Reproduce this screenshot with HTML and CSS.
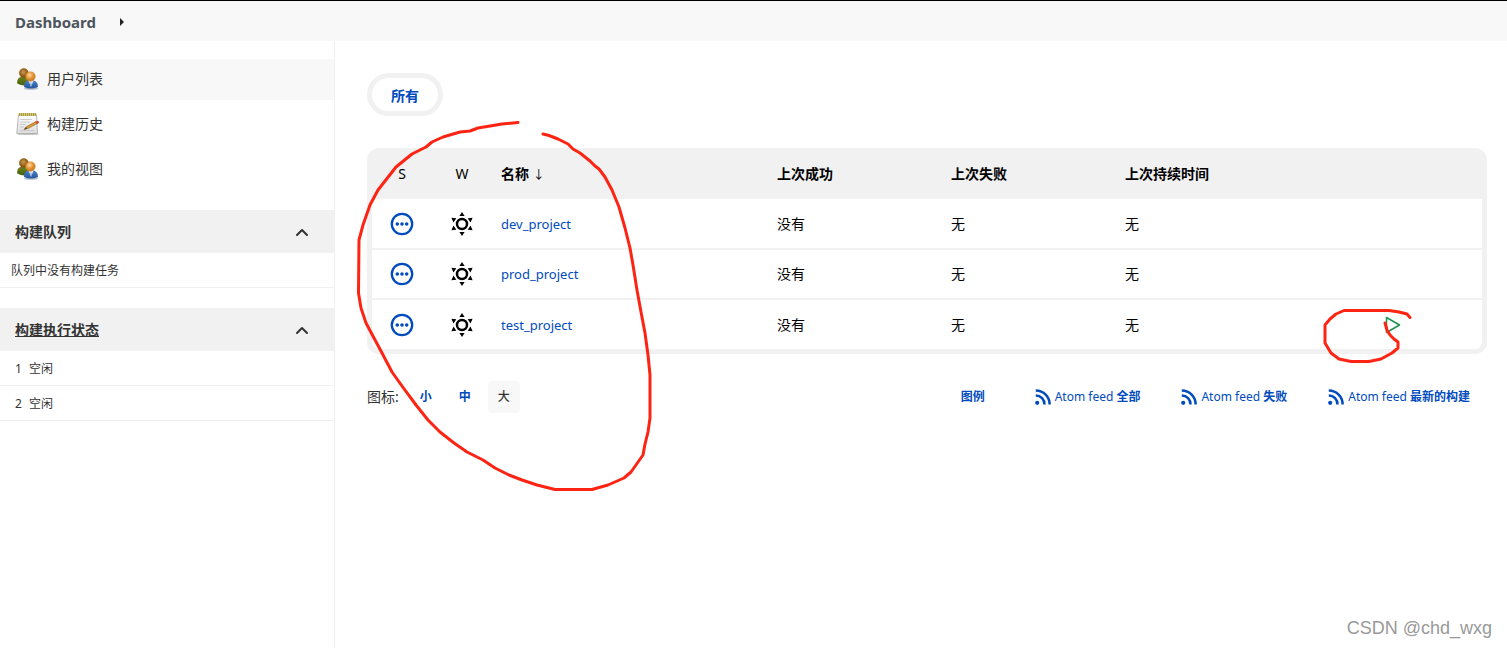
FILE: index.html
```html
<!DOCTYPE html>
<html lang="zh-CN">
<head>
<meta charset="utf-8">
<title>Dashboard</title>
<link rel="stylesheet" href="styles.css">
</head>
<body>
<svg class="sprites" width="0" height="0" aria-hidden="true">
  <defs>
    <radialGradient id="skin" cx="40%" cy="35%"><stop offset="0" stop-color="#ffd9a0"/><stop offset=".6" stop-color="#eba047"/><stop offset="1" stop-color="#d08328"/></radialGradient>
    <radialGradient id="tan" cx="45%" cy="40%"><stop offset="0" stop-color="#c99b50"/><stop offset="1" stop-color="#8a5310"/></radialGradient>
    <linearGradient id="blue" x2="0" y2="1"><stop offset="0" stop-color="#4b83c8"/><stop offset="1" stop-color="#24549b"/></linearGradient>
    <linearGradient id="green" x2="0" y2="1"><stop offset="0" stop-color="#6f8420"/><stop offset="1" stop-color="#48600c"/></linearGradient>
    <linearGradient id="paper" x2="0" y2="1"><stop offset="0" stop-color="#fff"/><stop offset="1" stop-color="#dcdcdc"/></linearGradient>
  </defs>
  <symbol id="people" viewBox="0 0 24 24">
    <path d="M1.200 16.500Q.8 10 6 9.500H10Q14 10 14 15V17Q8 20 1.200 16.500Z" fill="url(#green)"/>
    <circle cx="7.800" cy="6" r="4.500" fill="url(#tan)" stroke="#855516" stroke-width=".5"/>
    <ellipse cx="15" cy="21.500" rx="7" ry="1.300" fill="#8a95a5" opacity=".6"/>
    <path d="M8 20Q8 14 12.500 13.500H17Q22 14 22 20Q15 23 8 20Z" fill="url(#blue)"/>
    <path d="M12.500 13.500L15 20L17.500 13.500Z" fill="#e7edf5"/>
    <path d="M15 14.500L14.300 18L15 19.500L15.700 18Z" fill="#7795ba"/>
    <circle cx="14.500" cy="9.500" r="4.800" fill="url(#skin)" stroke="#d68d35" stroke-width=".5"/>
  </symbol>
  <symbol id="notepad" viewBox="0 0 24 24">
    <ellipse cx="12" cy="22" rx="11" ry="1" fill="#888" opacity=".5"/>
    <path d="M2.500 3H20.500L21.500 21.500H.8Z" fill="url(#paper)" stroke="#a8a8a8" stroke-width=".8"/>
    <path d="M2.500 1.200H20.500V3.800H2.500Z" fill="#cfc166"/>
    <path d="M3.500 1V4M5.500 1V4M7.500 1V4M9.500 1V4M11.500 1V4M13.500 1V4M15.500 1V4M17.500 1V4M19.500 1V4" stroke="#998a30" stroke-width=".7"/>
    <path d="M4 7.500H16M4 10H14M4 12.500H10M4 15H8M4 18.500H18" stroke="#c2c2c2" stroke-width=".8"/>
    <path d="M8 17.500L10.500 14.500L20 9.500L21.500 11.500L12 16.500Z" fill="#d69a35" stroke="#80591c" stroke-width=".5"/>
    <path d="M8 17.500L10 15L11.500 16.500Z" fill="#5b4832"/>
    <path d="M19.500 9.700L21.500 8.700Q23.800 9.500 22.700 11L21 12Z" fill="#d83a3a"/>
  </symbol>
  <symbol id="chevron" viewBox="0 0 14 10"><path d="M2 8L7 3L12 8" fill="none" stroke="#333" stroke-width="2" stroke-linecap="round" stroke-linejoin="round"/></symbol>
  <symbol id="pending" viewBox="0 0 24 24"><circle cx="12" cy="12" r="10.200" fill="none" stroke="#004bbd" stroke-width="2.300"/><circle cx="7.300" cy="12" r="1.800" fill="#004bbd"/><circle cx="12" cy="12" r="1.800" fill="#004bbd"/><circle cx="16.700" cy="12" r="1.800" fill="#004bbd"/></symbol>
  <symbol id="sun" viewBox="0 0 24 24"><circle cx="12" cy="12" r="5" fill="none" stroke="#000" stroke-width="2.500"/><path d="M12 0L14.600 4H9.400ZM12 24L14.600 20H9.400ZM1.400 5.800L6.300 6.200L3.500 10.600ZM22.600 5.800L17.700 6.200L20.500 10.600ZM1.400 18.200L6.300 17.800L3.500 13.400ZM22.600 18.200L17.700 17.800L20.500 13.400Z" fill="#000"/></symbol>
  <symbol id="feed" viewBox="0 0 16 16"><circle cx="2.200" cy="13.800" r="2.100" fill="#004bbd"/><path d="M.8 6.500A8.700 8.700 0 0 1 9.500 15.500M.8 1.400A13.800 13.800 0 0 1 14.600 15.500" fill="none" stroke="#004bbd" stroke-width="2.500"/></symbol>
</svg>

<header class="breadcrumbs">
  <a class="crumb" href="#">Dashboard</a>
  <svg class="crumb-arrow" viewBox="0 0 4 8"><path d="M0 0L4 4L0 8Z" fill="#222"/></svg>
</header>

<div class="page">
  <aside class="sidebar">
    <nav class="tasks">
      <a class="task task-active" href="#"><svg class="icon"><use href="#people"/></svg>用户列表</a>
      <a class="task" href="#"><svg class="icon"><use href="#notepad"/></svg>构建历史</a>
      <a class="task" href="#"><svg class="icon"><use href="#people"/></svg>我的视图</a>
    </nav>
    <section class="pane">
      <div class="pane-head"><h2 class="pane-title">构建队列</h2><button class="toggle" type="button" aria-label="收起构建队列"><svg class="chevron"><use href="#chevron"/></svg></button></div>
      <p class="pane-row pane-note">队列中没有构建任务</p>
    </section>
    <section class="pane">
      <div class="pane-head"><h2 class="pane-title"><a class="pane-link" href="#">构建执行状态</a></h2><button class="toggle" type="button" aria-label="收起构建执行状态"><svg class="chevron"><use href="#chevron"/></svg></button></div>
      <p class="pane-row"><span>1</span><span>空闲</span></p>
      <p class="pane-row"><span>2</span><span>空闲</span></p>
    </section>
  </aside>

  <main class="main">
    <a class="tab" href="#">所有</a>
    <div class="table-frame">
      <table class="projects">
        <colgroup><col class="col-icon"><col class="col-icon"><col><col class="col-time"><col class="col-time"><col class="col-duration"><col class="col-run"></colgroup>
        <thead>
          <tr><th class="center light">S</th><th class="center light">W</th><th>名称 <span class="sort">↓</span></th><th>上次成功</th><th>上次失败</th><th>上次持续时间</th><th></th></tr>
        </thead>
        <tbody>
          <tr><td class="center"><svg class="icon"><use href="#pending"/></svg></td><td class="center"><svg class="icon"><use href="#sun"/></svg></td><td><a class="link" href="#">dev_project</a></td><td>没有</td><td>无</td><td>无</td><td></td></tr>
          <tr><td class="center"><svg class="icon"><use href="#pending"/></svg></td><td class="center"><svg class="icon"><use href="#sun"/></svg></td><td><a class="link" href="#">prod_project</a></td><td>没有</td><td>无</td><td>无</td><td></td></tr>
          <tr><td class="center"><svg class="icon"><use href="#pending"/></svg></td><td class="center"><svg class="icon"><use href="#sun"/></svg></td><td><a class="link" href="#">test_project</a></td><td>没有</td><td>无</td><td>无</td><td class="center"><button class="run" type="button" aria-label="构建"><svg class="run-icon" viewBox="0 0 16 18"><path d="M1.500 1.500L14.500 9L1.500 16.500Z" fill="none" stroke="#1f9250" stroke-width="1.500" stroke-linejoin="round"/></svg></button></td></tr>
        </tbody>
      </table>
    </div>
    <div class="table-foot">
      <div class="sizes"><span class="sizes-label">图标:</span><a class="size" href="#">小</a><a class="size" href="#">中</a><span class="size size-current">大</span></div>
      <div class="feeds">
        <a class="feed" href="#"><b>图例</b></a>
        <a class="feed" href="#"><svg class="feed-icon"><use href="#feed"/></svg><span>Atom feed <b>全部</b></span></a>
        <a class="feed" href="#"><svg class="feed-icon"><use href="#feed"/></svg><span>Atom feed <b>失败</b></span></a>
        <a class="feed" href="#"><svg class="feed-icon"><use href="#feed"/></svg><span>Atom feed <b>最新的构建</b></span></a>
      </div>
    </div>
  </main>
</div>

<svg class="ink" width="1507" height="648" aria-hidden="true">
  <path d="M518 122.500L502 124L478 128L470 131L460 132L443 137L432 142L426 147L412 154L396 167L378 190L370 205L363 225L359 240L358.500 293L361 308L366 323L382 353L392 372L402 386L416 405L428 420L440 432L454 443L467 452L483 460L495 468L509 475L522 480L537 485L555 489.500H592L608 485L624 478L631 472L643 455L645 444L648 432L650 418V375L648 355L645 333L641 312L637 290L633 265L630 248L625 228L619 207L612 190L605 177L599 169L595 166L590 161L580 153L573 149L568 144L558 139L549 135.500L543 134"/>
  <path d="M1410 317.500L1407 314L1399 312L1389 310.500H1344L1336 314L1330 319L1325 325V343L1331 353L1339 359L1351 361.500H1369L1381 359L1392 353L1398 348V342L1394 339L1390 335L1387 330L1385 323"/>
</svg>
<div class="watermark">CSDN @chd_wxg</div>
</body>
</html>
```

FILE: styles.css
```css
* {
  box-sizing: border-box;
}

body {
  margin: 0;
  min-height: 100vh;
  display: flex;
  flex-direction: column;
  position: relative;
  background: #fff;
  color: #333;
  font: 14px/20px "Noto Sans", "Noto Sans CJK SC", sans-serif;
}

a {
  color: inherit;
  text-decoration: none;
}

button {
  padding: 0;
  border: 0;
  background: none;
  cursor: pointer;
}

svg {
  display: block;
}

.sprites {
  position: absolute;
}

.breadcrumbs {
  display: flex;
  align-items: center;
  gap: 24px;
  height: 41px;
  padding: 1px 15px 0;
  border-top: 1px solid #000;
  background: #f8f8f8;
}

.crumb {
  color: #4d545d;
  font-size: 15px;
  font-weight: 700;
}

.crumb-arrow {
  width: 4px;
  height: 8px;
}

.page {
  flex: 1;
  display: flex;
}

.sidebar {
  flex: 0 0 335px;
  padding-top: 18px;
  border-right: 1px solid #f0f0f0;
}

.tasks {
  display: flex;
  flex-direction: column;
  gap: 4px;
  margin-bottom: 20px;
}

.task {
  display: flex;
  align-items: center;
  gap: 7px;
  height: 41px;
  padding: 0 16px 2px;
}

.task-active {
  background: #f8f8f8;
}

.icon {
  width: 24px;
  height: 24px;
}

.pane {
  margin-bottom: 20px;
}

.pane-head {
  display: flex;
  align-items: center;
  justify-content: space-between;
  height: 43px;
  padding: 0 25px 0 15px;
  background: #f1f1f1;
}

.pane-title {
  margin: 0;
  font-size: 14px;
}

.pane-link {
  text-decoration: underline;
}

.chevron {
  width: 14px;
  height: 10px;
}

.pane-row {
  display: flex;
  align-items: center;
  gap: 7px;
  height: 35px;
  margin: 0;
  padding: 2px 15px 0;
  border-bottom: 1px solid #f0f0f0;
  font-size: 12px;
}

.pane-note {
  padding: 2px 11px 0;
}

.main {
  flex: 1;
  padding: 32px 20px 32px 32px;
}

.tab {
  display: inline-block;
  padding: 8px 19px 5px;
  border: 5px solid #f1f1f1;
  border-radius: 24px;
  color: #004bbd;
  font-weight: 700;
  vertical-align: top;
}

.table-frame {
  margin-top: 32px;
  border: 5px solid #f1f1f1;
  border-radius: 12px;
  overflow: hidden;
}

.projects {
  width: 100%;
  table-layout: fixed;
  border-collapse: collapse;
  color: #000;
}

.col-icon {
  width: 60px;
}

.col-time {
  width: 174px;
}

.col-duration {
  width: 188px;
}

.col-run {
  width: 178px;
}

.projects th {
  height: 46px;
  padding: 0 9px 4px;
  background: #f1f1f1;
  text-align: left;
}

.projects td {
  height: 50px;
  padding: 0 9px;
}

.projects tr + tr td {
  border-top: 2px solid #f1f1f1;
}

.projects .center {
  text-align: center;
}

.projects .light {
  font-weight: 400;
}

.center svg {
  margin: 0 auto;
}

.sort {
  font-size: 12px;
  font-weight: 400;
}

.link {
  color: #004bbd;
  font-size: 13px;
}

.run {
  display: block;
  margin: 0 auto;
}

.run-icon {
  width: 16px;
  height: 18px;
}

.table-foot {
  display: flex;
  align-items: center;
  justify-content: space-between;
  margin-top: 27px;
  padding-right: 17px;
}

.sizes,
.feeds,
.feed {
  display: flex;
  align-items: center;
}

.sizes {
  gap: 7px;
}

.sizes-label {
  margin-right: 4px;
}

.size {
  width: 32px;
  height: 32px;
  border-radius: 4px;
  color: #004bbd;
  font-size: 12px;
  font-weight: 700;
  line-height: 32px;
  text-align: center;
}

.size-current {
  background: #f8f8f8;
  color: #333;
  font-weight: 500;
}

.feeds {
  gap: 41px;
  color: #004bbd;
  font-size: 12px;
}

.feed {
  gap: 4px;
}

.feed:first-child {
  margin-right: 9px;
}

.feed-icon {
  width: 16px;
  height: 16px;
}

.ink {
  position: absolute;
  top: 0;
  left: 0;
  fill: none;
  stroke: #fd2414;
  stroke-width: 3;
  stroke-linecap: round;
  stroke-linejoin: round;
  pointer-events: none;
}

.watermark {
  position: absolute;
  right: 15px;
  bottom: 9px;
  color: #999;
  font: 18px/22px "Liberation Sans", Arial, sans-serif;
}
```
